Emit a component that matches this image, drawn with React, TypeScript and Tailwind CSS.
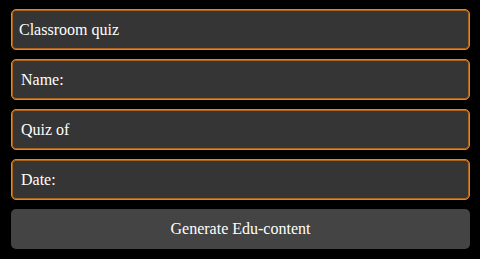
export default function App() {
  const fields = [
    { label: 'Classroom quiz', pad: 'pl-[7px]' },
    { label: 'Name:', pad: 'pl-[9px]' },
    { label: 'Quiz of', pad: 'pl-[9px]' },
    { label: 'Date:', pad: 'pl-[9px]' },
  ];

  return (
    <div className="w-[480px] h-[259px] bg-black pl-[11px] pr-[10px] pt-[9px] flex flex-col gap-[9px] font-['Liberation_Serif',serif]">
      {fields.map((f) => (
        <div
          key={f.label}
          className={`h-[41px] w-full rounded-[5px] border border-[#ff8000] shadow-[inset_0_0_0_1px_rgba(255,128,0,0.6)] bg-[#353535] flex items-center ${f.pad} text-[16px] text-white`}
        >
          {f.label}
        </div>
      ))}
      <button className="h-[40px] w-full rounded-[5px] bg-[#444444] text-[16px] text-white flex items-center justify-center">
        Generate Edu-content
      </button>
    </div>
  );
}
